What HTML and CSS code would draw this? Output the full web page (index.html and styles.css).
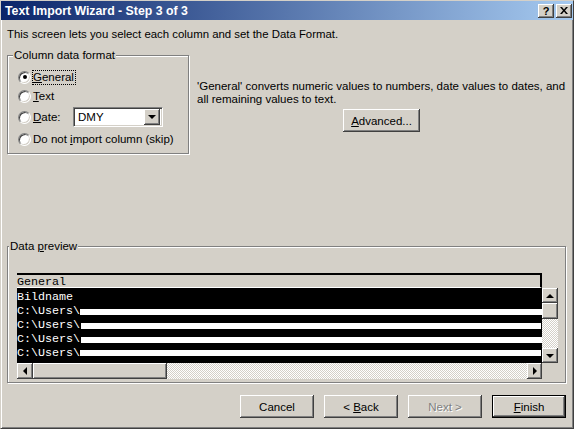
FILE: index.html
```html
<!DOCTYPE html>
<html lang="en">
<head>
    <meta charset="utf-8">
    <title>Text Import Wizard - Step 3 of 3</title>
    <link rel="stylesheet" href="styles.css">
</head>
<body>
<div class="window">
    <div class="titlebar">
        <span class="title">Text Import Wizard - Step 3 of 3</span>
        <div class="caption-btns">
            <span class="cap-btn">?</span>
            <span class="cap-btn"><svg width="8" height="7" viewBox="0 0 8 7"><path d="M0 0h2l2 2.4L6 0h2L5 3.5 8 7H6L4 4.6 2 7H0l3-3.5z" fill="#000"/></svg></span>
        </div>
    </div>

    <div class="client">
        <p class="intro">This screen lets you select each column and set the Data Format.</p>

        <div class="top-row">
            <fieldset class="group format-group">
                <legend>Column data format</legend>
                <div class="radio-row r1"><span class="radio checked"></span><span class="focus"><u>G</u>eneral</span></div>
                <div class="radio-row r2"><span class="radio"></span><span><u>T</u>ext</span></div>
                <div class="radio-row r3"><span class="radio"></span><span class="date-label"><u>D</u>ate:</span>
                    <span class="combo"><span class="combo-text">DMY</span><span class="combo-btn"><span class="arrow down"></span></span></span>
                </div>
                <div class="radio-row r4"><span class="radio"></span><span>Do not <u>i</u>mport column (skip)</span></div>
            </fieldset>

            <div class="desc">
                <p>'General' converts numeric values to numbers, date values to dates, and<br>all remaining values to text.</p>
                <button class="btn advanced"><u>A</u>dvanced...</button>
            </div>
        </div>

        <fieldset class="group preview-group">
            <legend>Data <u>p</u>review</legend>
            <div class="preview">
                <div class="preview-head">General</div>
                <div class="preview-data">
                    <div class="line">Bildname</div>
                    <div class="line">C:\Users\<span class="mask m1"></span></div>
                    <div class="line">C:\Users\<span class="mask m2"></span></div>
                    <div class="line">C:\Users\<span class="mask m3"></span></div>
                    <div class="line">C:\Users\<span class="mask m4"></span></div>
                </div>
                <div class="vscroll">
                    <span class="sbtn v-btn"><span class="arrow up"></span></span>
                    <span class="thumb v-thumb"></span>
                    <span class="track"></span>
                    <span class="sbtn v-btn"><span class="arrow down"></span></span>
                </div>
                <div class="hscroll">
                    <span class="sbtn h-btn"><span class="arrow left"></span></span>
                    <span class="thumb h-thumb"></span>
                    <span class="track"></span>
                    <span class="sbtn h-btn last"><span class="arrow right"></span></span>
                </div>
            </div>
        </fieldset>

        <div class="actions">
            <button class="btn">Cancel</button>
            <button class="btn">&lt; <u>B</u>ack</button>
            <button class="btn disabled">Next &gt;</button>
            <button class="btn default"><u>F</u>inish</button>
        </div>
    </div>
</div>
</body>
</html>
```

FILE: styles.css
```css
* {
    box-sizing: border-box;
}

body {
    margin: 0;
    background: #d4d0c8;
    color: #000;
    font: 11.5px "Liberation Sans", Arial, sans-serif;
}

/* window frame */
.window {
    width: 574px;
    height: 429px;
    display: flex;
    flex-direction: column;
    background: #d4d0c8;
    border: 1px solid;
    border-color: #d4d0c8 #404040 #404040 #d4d0c8;
    box-shadow: inset 1px 1px #fff, inset -1px -1px #808080;
}

.titlebar {
    height: 19px;
    display: flex;
    align-items: center;
    justify-content: space-between;
    padding: 0 1px 0 4px;
    background: linear-gradient(to right, #0a246a, #a6caf0);
}

.title {
    color: #fff;
    font-weight: bold;
    font-size: 12.3px;
}

.caption-btns {
    display: flex;
    gap: 2px;
}

.cap-btn {
    width: 16px;
    height: 14px;
    display: flex;
    align-items: center;
    justify-content: center;
    background: #d4d0c8;
    font-weight: bold;
    font-size: 11px;
    box-shadow: inset -1px -1px #404040, inset 1px 1px #fff, inset -2px -2px #808080;
}

/* dialog body */
.client {
    flex: 1;
    display: flex;
    flex-direction: column;
    padding: 0 7px 0 6px;
}

.intro {
    margin: 8px 0 0 0;
    line-height: 13px;
    font-size: 11.4px;
}

u {
    text-decoration-thickness: 1px;
    text-underline-offset: 1px;
}

.group {
    margin: 0;
    border: 1px solid #808080;
    box-shadow: 1px 1px #fff, inset 1px 1px #fff;
}

.group legend {
    line-height: 13px;
    padding: 0 1px;
    background: #d4d0c8;
}

.top-row {
    display: flex;
    margin-top: 8px;
}

.format-group {
    width: 182px;
    height: 105px;
    padding: 5px 0 0 10px;
}

.format-group legend {
    margin-left: -5px;
}

.radio-row {
    display: flex;
    align-items: center;
    line-height: 13px;
}

.r1 {
    height: 20px;
}

.r2 {
    height: 19px;
}

.r3, .r4 {
    height: 22px;
}

.radio {
    width: 13px;
    height: 13px;
    margin-right: 2px;
    border-radius: 50%;
    background: #fff;
    border: 1px solid;
    border-color: #808080 #fff #fff #808080;
    box-shadow: inset 1px 1px #404040, inset -1px -1px #d4d0c8;
    display: flex;
    align-items: center;
    justify-content: center;
}

.radio.checked::after {
    content: "";
    width: 4px;
    height: 4px;
    border-radius: 50%;
    background: #000;
}

.focus {
    margin-left: -1px;
    padding: 0 1px 0 0;
    border: 1px dotted #000;
}

.date-label {
    width: 40px;
}

.combo {
    width: 90px;
    height: 20px;
    display: flex;
    align-items: center;
    background: #fff;
    border: 1px solid;
    border-color: #808080 #fff #fff #808080;
    box-shadow: inset 1px 1px #404040, inset -1px -1px #d4d0c8;
    padding: 2px;
}

.combo-text {
    flex: 1;
    padding-left: 2px;
}

.combo-btn {
    width: 16px;
    height: 16px;
    display: flex;
    align-items: center;
    justify-content: center;
    background: #d4d0c8;
    box-shadow: inset -1px -1px #404040, inset 1px 1px #fff, inset -2px -2px #808080;
}

.desc {
    flex: 1;
    margin-left: 8px;
    padding-top: 31px;
    display: flex;
    flex-direction: column;
    align-items: center;
}

.desc p {
    margin: 0;
    align-self: stretch;
    line-height: 13px;
    white-space: nowrap;
}

/* push buttons */
.btn {
    width: 74px;
    height: 23px;
    padding: 0;
    font: inherit;
    color: #000;
    background: #d4d0c8;
    border: none;
    box-shadow: inset -1px -1px #404040, inset 1px 1px #fff, inset -2px -2px #808080;
}

.btn.advanced {
    width: 77px;
    margin-top: 3px;
}

.btn.disabled {
    color: #808080;
    text-shadow: 1px 1px #fff;
}

.btn.default {
    border: 1px solid #000;
}

/* preview grid */
.preview-group {
    margin-top: 86px;
    padding: 20px 6px 3px 9px;
}

.preview-group legend {
    margin-left: -8px;
}

.preview {
    display: grid;
    grid-template-columns: 525px 16px;
    grid-template-rows: 15px 75px 16px;
    font: 11.7px "Liberation Mono", "Courier New", monospace;
}

.preview-head {
    grid-area: 1 / 1;
    border-top: 2px solid #000;
    border-right: 2px solid #000;
    border-bottom: 1px solid #fff;
    line-height: 15px;
}

.preview-data {
    grid-area: 2 / 1;
    background: #000;
    color: #fff;
    padding-top: 2px;
}

.line {
    height: 14px;
    line-height: 14px;
    display: flex;
    white-space: pre;
}

.mask {
    flex: 1;
    height: 6px;
    margin-top: 5px;
    background: #fff;
}

.m2 { margin-left: 1px; margin-right: 1px; }
.m3 { margin-left: 1px; }
.m4 { margin-top: 4px; margin-right: 1px; }

.vscroll {
    grid-area: 2 / 2;
    display: flex;
    flex-direction: column;
}

.hscroll {
    grid-area: 3 / 1;
    display: flex;
}

.sbtn, .thumb {
    display: flex;
    align-items: center;
    justify-content: center;
    background: #d4d0c8;
    box-shadow: inset -1px -1px #404040, inset 1px 1px #fff, inset -2px -2px #808080;
}

.v-btn {
    height: 15px;
}

.v-thumb {
    height: 16px;
}

.h-btn {
    width: 16px;
}

.h-btn.last {
    width: 15px;
}

.h-thumb {
    width: 134px;
}

.track {
    flex: 1;
    background: repeating-conic-gradient(#fff 0 25%, #d4d0c8 0 50%) 0 0 / 2px 2px;
}

.arrow {
    width: 0;
    height: 0;
    border: 4px solid transparent;
}

.arrow.up {
    border-bottom-color: #000;
    border-top-width: 0;
}

.arrow.down {
    border-top-color: #000;
    border-bottom-width: 0;
}

.arrow.left {
    border-right-color: #000;
    border-left-width: 0;
}

.arrow.right {
    border-left-color: #000;
    border-right-width: 0;
}

/* bottom buttons */
.actions {
    display: flex;
    justify-content: flex-end;
    gap: 10px;
    margin-top: 12px;
}
```
